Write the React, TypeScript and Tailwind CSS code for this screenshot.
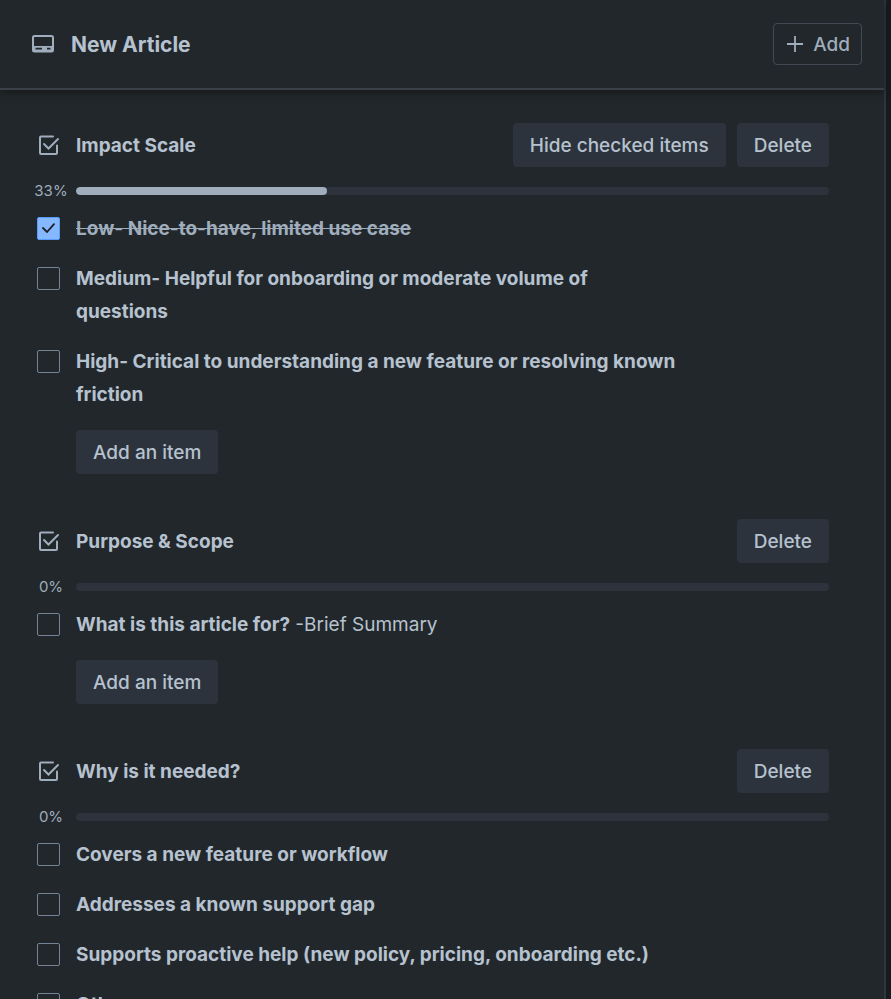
import { useState } from 'react';

type Item = { id: string; text: string; note?: string; checked: boolean };
type Checklist = { id: string; title: string; items: Item[] };

const initialChecklists: Checklist[] = [
  {
    id: 'impact',
    title: 'Impact Scale',
    items: [
      { id: 'low', text: 'Low- Nice-to-have, limited use case', checked: true },
      { id: 'medium', text: 'Medium- Helpful for onboarding or moderate volume of questions', checked: false },
      { id: 'high', text: 'High- Critical to understanding a new feature or resolving known friction', checked: false },
    ],
  },
  {
    id: 'purpose',
    title: 'Purpose & Scope',
    items: [{ id: 'summary', text: 'What is this article for?', note: '-Brief Summary', checked: false }],
  },
  {
    id: 'why',
    title: 'Why is it needed?',
    items: [
      { id: 'feature', text: 'Covers a new feature or workflow', checked: false },
      { id: 'gap', text: 'Addresses a known support gap', checked: false },
      { id: 'proactive', text: 'Supports proactive help (new policy, pricing, onboarding etc.)', checked: false },
      { id: 'other', text: 'Other', checked: false },
    ],
  },
];

const buttonClass =
  'h-11 rounded-[4px] bg-[#2d333c] px-[17px] pt-0.5 text-[19px] font-medium text-[#b6c2cf] hover:bg-[#38414a] cursor-pointer';

function CardIcon() {
  return (
    <svg width="22" height="18" viewBox="0 0 22 18" fill="none" aria-hidden="true">
      <rect x="1" y="1" width="20" height="15.500" rx="1.500" stroke="#9fadbc" strokeWidth="2" />
      <path d="M1 11h20v4.500a1 1 0 0 1-1 1H2a1 1 0 0 1-1-1z" fill="#9fadbc" />
      <path d="M3.500 13.700h6.500M15 13.700h3.500" stroke="#22272b" strokeWidth="1.800" />
    </svg>
  );
}

function ChecklistIcon() {
  return (
    <svg width="23" height="23" viewBox="0 0 23 23" fill="none" stroke="#9fadbc" strokeWidth="2" aria-hidden="true">
      <path d="M16 2.500H4a1 1 0 0 0-1 1V19a1 1 0 0 0 1 1h15a1 1 0 0 0 1-1v-7.500" strokeLinecap="round" />
      <path d="M7 10l4.500 4.500L21 5" strokeLinecap="round" />
    </svg>
  );
}

function Section({ list, onToggle }: { list: Checklist; onToggle: (itemId: string) => void }) {
  const done = list.items.filter((item) => item.checked).length;
  const progress = (done / list.items.length) * 100;

  return (
    <section>
      {/* Title row */}
      <div className="flex items-center">
        <div className="w-[39px] shrink-0">
          <ChecklistIcon />
        </div>
        <h3 className="flex-1 pt-0.5 text-[19px] font-bold">{list.title}</h3>
        <div className="flex gap-[11px]">
          {done > 0 && <button className={buttonClass}>Hide checked items</button>}
          <button className={buttonClass}>Delete</button>
        </div>
      </div>

      {/* Progress */}
      <div className="mt-3 flex h-6 items-center">
        <span className="-ml-1 mr-[7px] w-9 shrink-0 text-center text-[15px] text-[#9fadbc]">
          {Math.floor(progress)}%
        </span>
        <div className="h-2 flex-1 overflow-hidden rounded-full bg-[#2d333c]">
          <div className="h-full rounded-full bg-[#9fadbc]" style={{ width: `${progress}%` }} />
        </div>
      </div>

      {/* Items */}
      <ul className="mt-[9px] flex flex-col gap-[17px] pr-[148px]">
        {list.items.map((item) => (
          <li key={item.id} className="flex items-start">
            <div className="flex h-[33px] w-[39px] shrink-0 items-center">
              <div className="relative h-[23px] w-[23px]">
                <input
                  id={item.id}
                  type="checkbox"
                  checked={item.checked}
                  onChange={() => onToggle(item.id)}
                  className="block h-full w-full cursor-pointer appearance-none rounded-[2px] border border-[#738496] checked:border-[#579dff] checked:bg-[#85b8ff]"
                />
                {item.checked && (
                  <svg viewBox="0 0 23 23" fill="none" className="pointer-events-none absolute inset-0" aria-hidden="true">
                    <path d="M6 11l4 4L17 7.200" stroke="#1d2125" strokeWidth="1.800" strokeLinecap="round" />
                  </svg>
                )}
              </div>
            </div>
            <label
              htmlFor={item.id}
              className={
                item.checked
                  ? 'cursor-pointer text-[19px] leading-[33px] font-bold text-[#9fadbc] line-through'
                  : 'cursor-pointer text-[19px] leading-[33px] font-bold'
              }
            >
              {item.text}
              {item.note && <span className="font-normal"> {item.note}</span>}
            </label>
          </li>
        ))}
      </ul>

      <div className="mt-[19px] pl-[39px]">
        <button className={buttonClass}>Add an item</button>
      </div>
    </section>
  );
}

export default function App() {
  const [checklists, setChecklists] = useState(initialChecklists);

  const toggle = (listId: string, itemId: string) => {
    setChecklists((prev) =>
      prev.map((list) =>
        list.id !== listId
          ? list
          : {
              ...list,
              items: list.items.map((item) => (item.id === itemId ? { ...item, checked: !item.checked } : item)),
            }
      )
    );
  };

  return (
    <div className="h-screen overflow-hidden bg-[#181b1d] pr-[5px] font-['Inter',sans-serif] text-[#b6c2cf]">
      <div className="flex h-full flex-col border-r-2 border-[#2d363e] bg-[#22272b]">
        <header className="z-10 flex h-[90px] shrink-0 items-center border-b-2 border-[#3a4148] pr-[22px] pl-8 shadow-[0_3px_8px_rgba(0,0,0,0.35)]">
          <CardIcon />
          <h2 className="ml-[17px] flex-1 pt-0.5 text-[21px] font-bold">New Article</h2>
          <button className="flex h-[42px] cursor-pointer items-center gap-2 rounded-[4px] border border-[#414a53] px-[11px] text-[19px] font-medium text-[#9fadbc] hover:bg-[#2c333a]">
            <svg width="20" height="20" viewBox="0 0 20 20" stroke="#9fadbc" strokeWidth="1.800" aria-hidden="true">
              <path d="M10 2v16M2 10h16" />
            </svg>
            <span className="pt-0.5">Add</span>
          </button>
        </header>

        <main className="flex min-h-0 flex-1 flex-col gap-[45px] overflow-hidden pt-[33px] pr-[55px] pl-[37px]">
          {checklists.map((list) => (
            <Section key={list.id} list={list} onToggle={(itemId) => toggle(list.id, itemId)} />
          ))}
        </main>
      </div>
    </div>
  );
}
